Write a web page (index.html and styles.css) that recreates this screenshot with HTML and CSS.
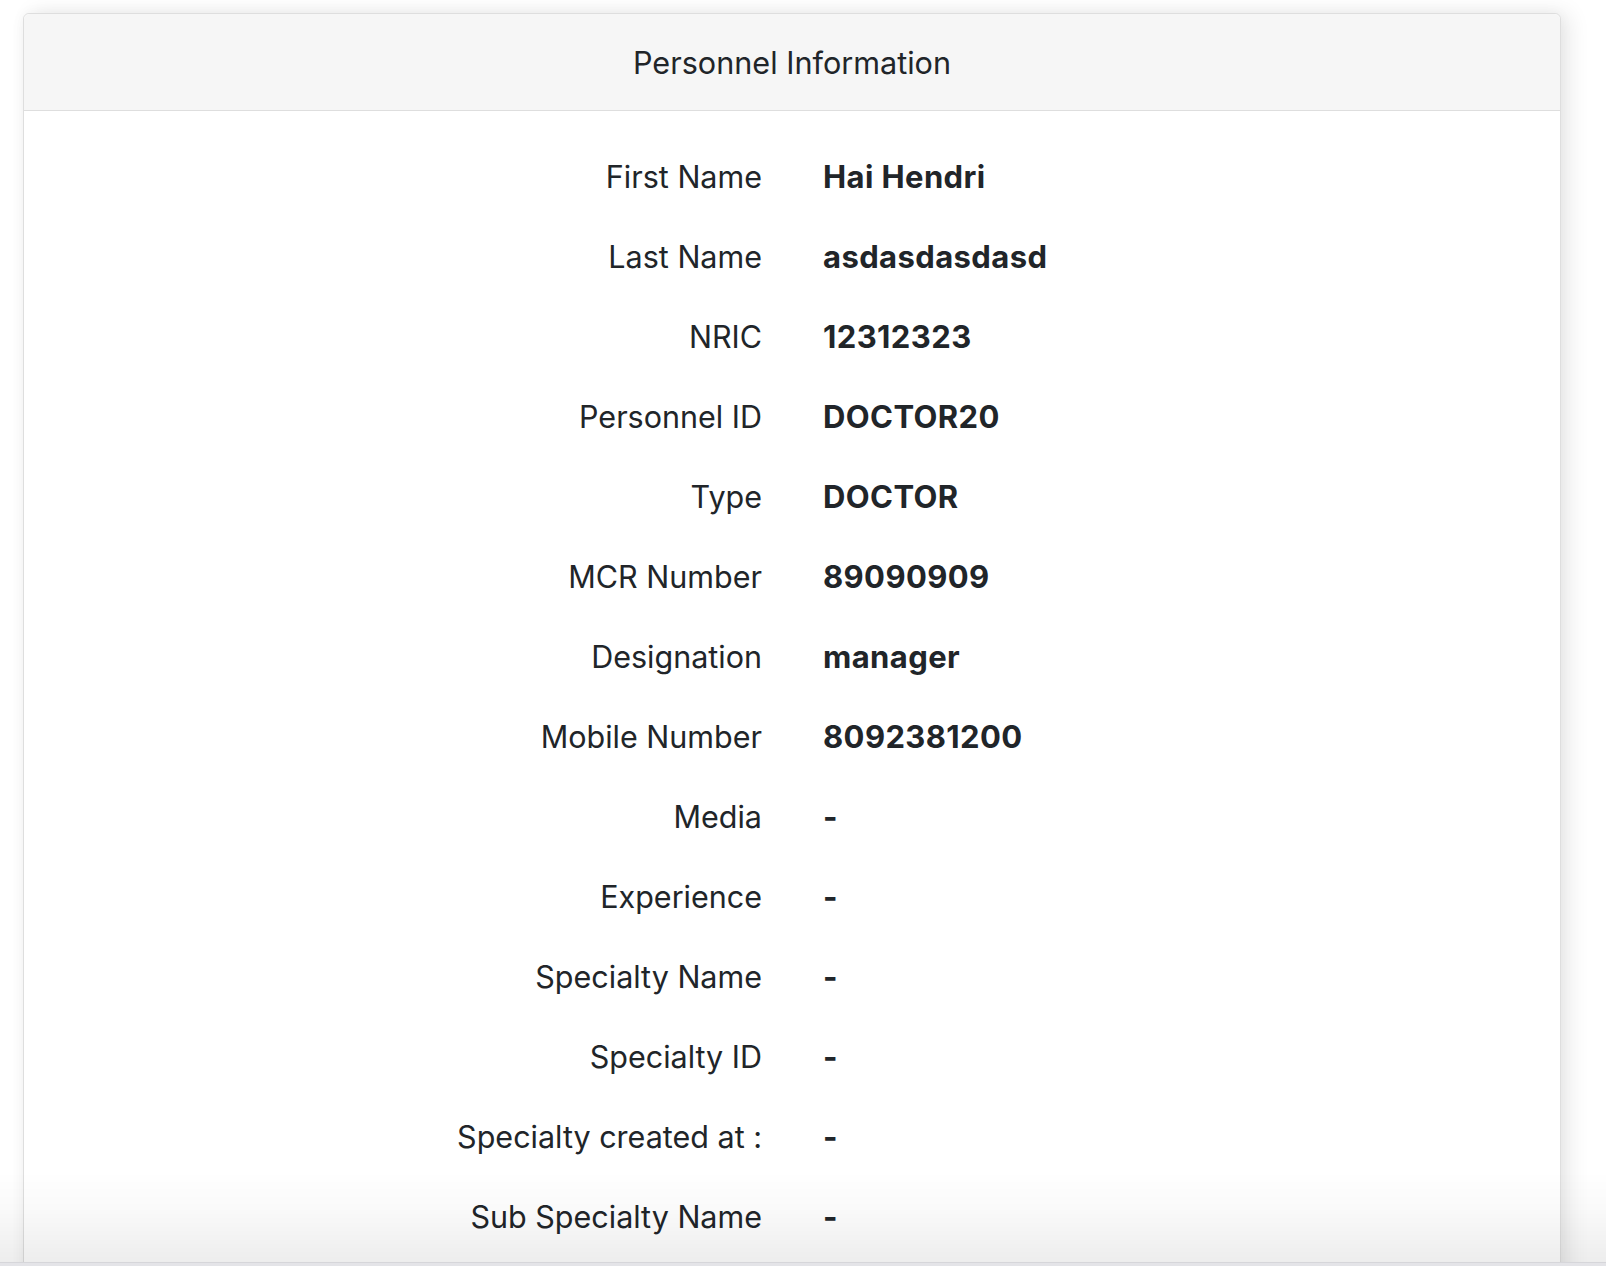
FILE: index.html
```html
<!DOCTYPE html>
<html lang="en">
<head>
<meta charset="utf-8">
<title>Personnel Information</title>
<link rel="stylesheet" href="styles.css">
</head>
<body>
<div class="page">
  <div class="card">
    <div class="card-header">Personnel Information</div>
    <div class="card-body">
      <div class="row"><div class="label">First Name</div><div class="value">Hai Hendri</div></div>
      <div class="row"><div class="label">Last Name</div><div class="value">asdasdasdasd</div></div>
      <div class="row"><div class="label">NRIC</div><div class="value">12312323</div></div>
      <div class="row"><div class="label">Personnel ID</div><div class="value">DOCTOR20</div></div>
      <div class="row"><div class="label">Type</div><div class="value">DOCTOR</div></div>
      <div class="row"><div class="label">MCR Number</div><div class="value">89090909</div></div>
      <div class="row"><div class="label">Designation</div><div class="value">manager</div></div>
      <div class="row"><div class="label">Mobile Number</div><div class="value">8092381200</div></div>
      <div class="row"><div class="label">Media</div><div class="value">-</div></div>
      <div class="row"><div class="label">Experience</div><div class="value">-</div></div>
      <div class="row"><div class="label">Specialty Name</div><div class="value">-</div></div>
      <div class="row"><div class="label">Specialty ID</div><div class="value">-</div></div>
      <div class="row"><div class="label">Specialty created at :</div><div class="value">-</div></div>
      <div class="row"><div class="label">Sub Specialty Name</div><div class="value">-</div></div>
    </div>
  </div>
</div>
<div class="bottom-fade"></div>
</body>
</html>
```
FILE: styles.css
```css
html, body {
  margin: 0;
  padding: 0;
  background: #ffffff;
  overflow: hidden;
}
body {
  font-family: Inter, "Noto Sans", "Liberation Sans", sans-serif;
  color: #212529;
}
.page {
  padding: 13px 45px 0 23px;
}
.card {
  border: 1px solid #dedede;
  border-radius: 6px;
  background: #fff;
  box-shadow: 8px 0 22px rgba(0, 0, 0, 0.09), 0 0 14px rgba(0, 0, 0, 0.04);
}
.card-header {
  height: 97px;
  display: flex;
  align-items: center;
  justify-content: center;
  background: #f6f6f6;
  border-bottom: 1px solid #dedede;
  border-radius: 6px 6px 0 0;
  font-size: 30.6px;
  font-weight: 400;
  padding-top: 1px;
  box-sizing: border-box;
}
.card-body {
  padding: 25px 0 40px;
}
.row {
  display: grid;
  grid-template-columns: 1fr 1fr;
  height: 80px;
  align-items: center;
}
.label {
  text-align: right;
  padding-right: 30px;
  font-size: 30.5px;
}
.value {
  padding-left: 31px;
  font-weight: 700;
  font-size: 31px;
  letter-spacing: 0.4px;
}
.bottom-fade {
  position: fixed;
  left: 0;
  right: 0;
  bottom: 0;
  height: 92px;
  background: linear-gradient(to bottom, rgba(0, 0, 0, 0) 0%, rgba(0, 0, 0, 0.02) 40%, rgba(0, 0, 0, 0.07) 100%);
  border-bottom: 3px solid #e4e4e8;
  pointer-events: none;
}
.bottom-fade::after {
  content: "";
  position: absolute;
  left: 0;
  right: 0;
  bottom: 0;
  height: 1px;
  background: #d6d6da;
}
```
